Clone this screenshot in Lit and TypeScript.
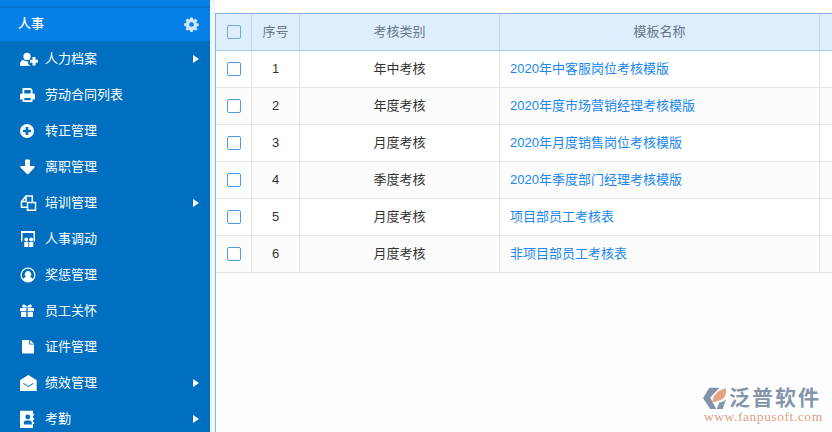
import { LitElement, html, css, svg } from "lit";
import { customElement } from "lit/decorators.js";

const icons: Record<string, unknown> = {
  userPlus: svg`<path d="M7 2.800a3.600 3.600 0 1 1 0 7.200 3.600 3.600 0 0 1 0-7.200zM0 15c0-3 1.300-5 3.500-5 1 .8 2.200 1.200 3.500 1.200 1 0 1.500-.1 2.300-.5C8.500 10.700 8 11.500 8 12.300c0 1.600 1 3 2.500 3.700H1.200C.4 16 0 15.600 0 15z"/><path d="M12.500 7h3v2.700H18v3h-2.500v2.800h-3v-2.800H10v-3h2.500z"/>`,
  print: svg`<path fill-rule="evenodd" d="M2.500 2h8.300l1.700 1.700V7.500h-1.800V4H4.300v3.500H2.500zM1.500 7.500h12a1.500 1.500 0 0 1 1.500 1.500v4.500h-2.500V16h-10v-2.500H0V9a1.500 1.500 0 0 1 1.500-1.500zM4.300 12v2.300h6.400V12z"/>`,
  plus: svg`<path fill-rule="evenodd" d="M7 2a7 7 0 1 1 0 14A7 7 0 0 1 7 2zM5.700 5v2.700H3v2.600h2.700V13h2.600v-2.700H11V7.700H8.300V5z"/>`,
  down: svg`<path d="M5 2.500a1 1 0 0 1 1-1h3a1 1 0 0 1 1 1V8h3.700a1 1 0 0 1 .7 1.700l-6 6.200a1 1 0 0 1-1.400 0L.6 9.700A1 1 0 0 1 1.300 8H5z"/>`,
  copy: svg`<path fill="none" stroke="#fff" stroke-width="1.500" d="M7 13.200H1.500V7.500L6 2h6.300v6M6 2.500V7.500H1.500M7.500 8.500h8v7.800h-8z"/>`,
  board: svg`<path fill-rule="evenodd" d="M1 1h14v10.500h-1.500V3H2.500v8.500H1z"/><path d="M4.200 12h4.200v5H4.200zM9.200 12h4.100v5H9.200z"/><circle cx="6.300" cy="9.500" r="1.900"/><circle cx="11.200" cy="9.500" r="1.900"/>`,
  userCircle: svg`<path fill-rule="evenodd" d="M8 1.500a7.500 7.500 0 1 1 0 15 7.500 7.500 0 0 1 0-15zm0 1.300a6.200 6.200 0 0 0-4.800 10.100C4 11.500 5.400 11 6 11a3.300 3.300 0 1 1 4 0c.6 0 2 .5 2.800 1.900A6.200 6.200 0 0 0 8 2.800z"/>`,
  gift: svg`<path fill-rule="evenodd" d="M0 6h6.300v3H0zM7.700 6H14v3H7.700zM1 9.800h5.300V15H1zM7.700 9.800H13V15H7.700zM3.800 2.500c1.300 0 2.400 1 3.200 2.400C7.800 3.500 8.900 2.500 10.200 2.500c1 0 1.600.7 1.600 1.500s-.6 1.500-1.600 1.500H3.800C2.800 5.500 2.200 4.800 2.200 4s.6-1.500 1.600-1.500z"/>`,
  file: svg`<path d="M2 2h7.200v4.600H14v9H2zM10.200 2 14 5.700h-3.800z"/>`,
  mail: svg`<path fill-rule="evenodd" d="M8.300 1 16.700 6.300V17H0V6.300zM3.200 9.800 8.300 13l5.200-3.200-.5-.7-4.700 2.800-4.600-2.800z"/>`,
  book: svg`<path fill-rule="evenodd" d="M0 .7h13v3h1.200v1.700H13V8h1.200v1.700H13v2.600h1.200V14H13v4H0zM7.800 4.500a2.400 2.400 0 1 0 0 4.800 2.400 2.400 0 0 0 0-4.800zM3.800 14.500h8v-1.800c0-1.200-1-2.200-2.200-2.200H6c-1.200 0-2.200 1-2.200 2.200z"/>`,
};

const menu = [
  ["userPlus", "人力档案", true],
  ["print", "劳动合同列表", false],
  ["plus", "转正管理", false],
  ["down", "离职管理", false],
  ["copy", "培训管理", true],
  ["board", "人事调动", false],
  ["userCircle", "奖惩管理", false],
  ["gift", "员工关怀", false],
  ["file", "证件管理", false],
  ["mail", "绩效管理", true],
  ["book", "考勤", true],
] as const;

const rows = [
  ["1", "年中考核", "2020年中客服岗位考核模版"],
  ["2", "年度考核", "2020年度市场营销经理考核模版"],
  ["3", "月度考核", "2020年月度销售岗位考核模版"],
  ["4", "季度考核", "2020年季度部门经理考核模版"],
  ["5", "月度考核", "项目部员工考核表"],
  ["6", "月度考核", "非项目部员工考核表"],
];

@customElement("app-root")
export class AppRoot extends LitElement {
  static styles = css`
    :host {
      display: flex;
      position: relative;
      width: 832px;
      height: 432px;
      overflow: hidden;
      background: #fff;
      font-family: "Liberation Sans", "Noto Sans CJK SC", sans-serif;
      font-size: 13px;
    }
    .side {
      width: 210px;
      flex: none;
      background: #006fbf;
      color: #fff;
    }
    .topband {
      height: 6px;
      background: #0680e6;
      border-bottom: 2px solid #0672cb;
    }
    .head {
      height: 33px;
      display: flex;
      align-items: center;
      justify-content: space-between;
      padding: 0 11px 0 18px;
      background: #0680e6;
      font-weight: 500;
    }
    .head span {
      margin-bottom: 5px;
    }
    .gear {
      width: 15px;
      height: 15px;
      fill: #cfe6fb;
    }
    .item {
      height: 36px;
      display: flex;
      align-items: center;
      padding-left: 20px;
    }
    .item svg.ic {
      width: 18px;
      height: 18px;
      fill: #fff;
      flex: none;
      margin-right: 7px;
    }
    .item .label {
      flex: 1;
      margin-bottom: 3px;
    }
    .arrow {
      width: 0;
      height: 0;
      margin-right: 11px;
      border-left: 6px solid #fff;
      border-top: 4.500px solid transparent;
      border-bottom: 4.500px solid transparent;
    }
    .gap {
      width: 5px;
      flex: none;
      background: #f0f7fe;
    }
    .main {
      flex: 1;
      padding-top: 13px;
      display: flex;
      flex-direction: column;
    }
    .panel {
      flex: 1;
      border-top: 1px solid #82b6e6;
      border-left: 1px solid #82b6e6;
      background: #fdfeff;
    }
    .row {
      display: grid;
      grid-template-columns: 36px 48px 200px 320px 1fr;
      height: 37px;
      background: #fff;
    }
    .row.alt {
      background: #fcfcfc;
    }
    .cell {
      display: flex;
      align-items: center;
      justify-content: center;
      border-right: 1px solid #e4e4e4;
      border-bottom: 1px solid #e4e4e4;
      color: #333;
      min-width: 0;
    }
    .cell.n {
      padding-bottom: 2px;
    }
    .cell.t {
      padding-bottom: 4px;
    }
    .cell:last-child {
      border-right: none;
    }
    .cell.link {
      justify-content: flex-start;
      padding-left: 10px;
      color: #2087ee;
    }
    .row.hd {
      background: #deeefc;
    }
    .row.hd .cell {
      color: #64788c;
      border-right-color: #c2d9ee;
      border-bottom-color: #a9cdee;
    }
    .check {
      width: 12px;
      height: 12px;
      border: 1px solid #4d9be0;
      border-radius: 2px;
      background: #fff;
    }
    .row.hd .check {
      background: #deeefc;
      border-color: #6ea9dc;
    }
    .logo {
      position: absolute;
      left: 703px;
      top: 386px;
      width: 124px;
      display: grid;
      grid-template-columns: 26px 1fr;
      align-items: center;
    }
    .logo svg {
      width: 23px;
      height: 23px;
    }
    .brand {
      font-size: 21px;
      line-height: 24px;
      color: #8494a9;
      font-weight: 700;
      letter-spacing: 2px;
      white-space: nowrap;
    }
    .url {
      grid-column: 1 / 3;
      font-family: "Liberation Serif", serif;
      font-size: 13.500px;
      line-height: 13px;
      letter-spacing: 0.550px;
      color: #dd9e80;
      white-space: nowrap;
      margin-left: 1px;
    }
  `;

  render() {
    return html`
      <div class="side">
        <div class="topband"></div>
        <div class="head">
          <span>人事</span>
          <svg class="gear" viewBox="0 0 16 16">
            <path fill-rule="evenodd" d="M6.700.5h2.600l.4 2 1.200.5 1.700-1.100 1.800 1.800-1.100 1.700.5 1.200 2 .4v2.600l-2 .4-.5 1.200 1.100 1.700-1.800 1.800-1.700-1.100-1.200.5-.4 2H6.700l-.4-2-1.200-.5-1.700 1.100-1.800-1.800 1.100-1.700-.5-1.200-2-.4V6.700l2-.4.5-1.200-1.100-1.700 1.800-1.800 1.700 1.100 1.200-.5zM8 5.500a2.500 2.500 0 1 0 0 5 2.500 2.500 0 0 0 0-5z" />
          </svg>
        </div>
        ${menu.map(
          ([ic, label, arrow]) => html`
            <div class="item">
              <svg class="ic" viewBox="0 0 18 18">${icons[ic]}</svg>
              <span class="label">${label}</span>
              ${arrow ? html`<span class="arrow"></span>` : null}
            </div>
          `
        )}
      </div>
      <div class="gap"></div>
      <div class="main">
        <div class="panel">
          <div class="row hd">
            <div class="cell"><span class="check"></span></div>
            <div class="cell t">序号</div>
            <div class="cell t">考核类别</div>
            <div class="cell t">模板名称</div>
            <div class="cell"></div>
          </div>
          ${rows.map(
            (r, i) => html`
              <div class="row ${i % 2 ? "alt" : ""}">
                <div class="cell"><span class="check"></span></div>
                <div class="cell n">${r[0]}</div>
                <div class="cell t">${r[1]}</div>
                <div class="cell t link">${r[2]}</div>
                <div class="cell"></div>
              </div>
            `
          )}
        </div>
      </div>
      <div class="logo">
        <svg viewBox="38 38 70 70">
          <path fill="#8293ab" d="M57 40h31L60 70l18 35H60L38 72z" />
          <path fill="#e2a585" d="M66 86C68 62 85 46 108 42c2 20-6 36-24 38z" />
          <path fill="#8293ab" d="M80 105l8-20c8-1 15-4 20-10l-10 30z" />
        </svg>
        <span class="brand">泛普软件</span>
        <span class="url">www.fanpusoft.com</span>
      </div>
    `;
  }
}
